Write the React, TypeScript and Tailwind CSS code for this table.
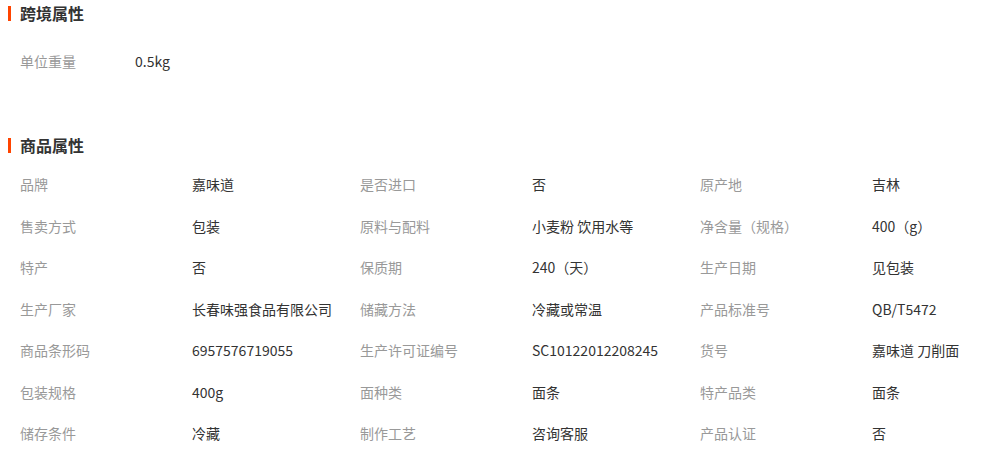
const cross: [string, string][] = [['单位重量', '0.5kg']];

const attrs: [string, string][] = [
  ['品牌', '嘉味道'],
  ['是否进口', '否'],
  ['原产地', '吉林'],
  ['售卖方式', '包装'],
  ['原料与配料', '小麦粉 饮用水等'],
  ['净含量（规格）', '400（g）'],
  ['特产', '否'],
  ['保质期', '240（天）'],
  ['生产日期', '见包装'],
  ['生产厂家', '长春味强食品有限公司'],
  ['储藏方法', '冷藏或常温'],
  ['产品标准号', 'QB/T5472'],
  ['商品条形码', '6957576719055'],
  ['生产许可证编号', 'SC10122012208245'],
  ['货号', '嘉味道 刀削面'],
  ['包装规格', '400g'],
  ['面种类', '面条'],
  ['特产品类', '面条'],
  ['储存条件', '冷藏'],
  ['制作工艺', '咨询客服'],
  ['产品认证', '否'],
];

function Title({ text, h }: { text: string; h: string }) {
  return (
    <div className={`flex items-center pl-[8px] ${h}`}>
      <span className="w-[3px] h-[15px] bg-[#ff4400]" />
      <h3 className="ml-[9px] text-[16px] font-bold text-[#333]">{text}</h3>
    </div>
  );
}

export default function App() {
  return (
    <div
      className="w-[984px] h-[464px] bg-white overflow-hidden text-[14px]"
      style={{ fontFamily: '"Microsoft YaHei", "Noto Sans CJK SC", "Noto Sans", sans-serif' }}
    >
      <Title text="跨境属性" h="h-[26px]" />
      <div className="pt-[14px] pl-[20px]">
        {cross.map(([k, v]) => (
          <div key={k} className="flex items-center h-[42px]">
            <span className="w-[115px] text-[#999]">{k}</span>
            <span className="text-[#333]">{v}</span>
          </div>
        ))}
      </div>

      <div className="mt-[49px]">
        <Title text="商品属性" h="h-[28px]" />
      </div>
      <div className="grid grid-cols-[340px_340px_340px] pt-[5px] pl-[20px]">
        {attrs.map(([k, v]) => (
          <div key={k} className="flex items-center h-[41.5px]">
            <span className="w-[172px] shrink-0 text-[#999]">{k}</span>
            <span className="text-[#333] whitespace-nowrap">{v}</span>
          </div>
        ))}
      </div>
    </div>
  );
}
